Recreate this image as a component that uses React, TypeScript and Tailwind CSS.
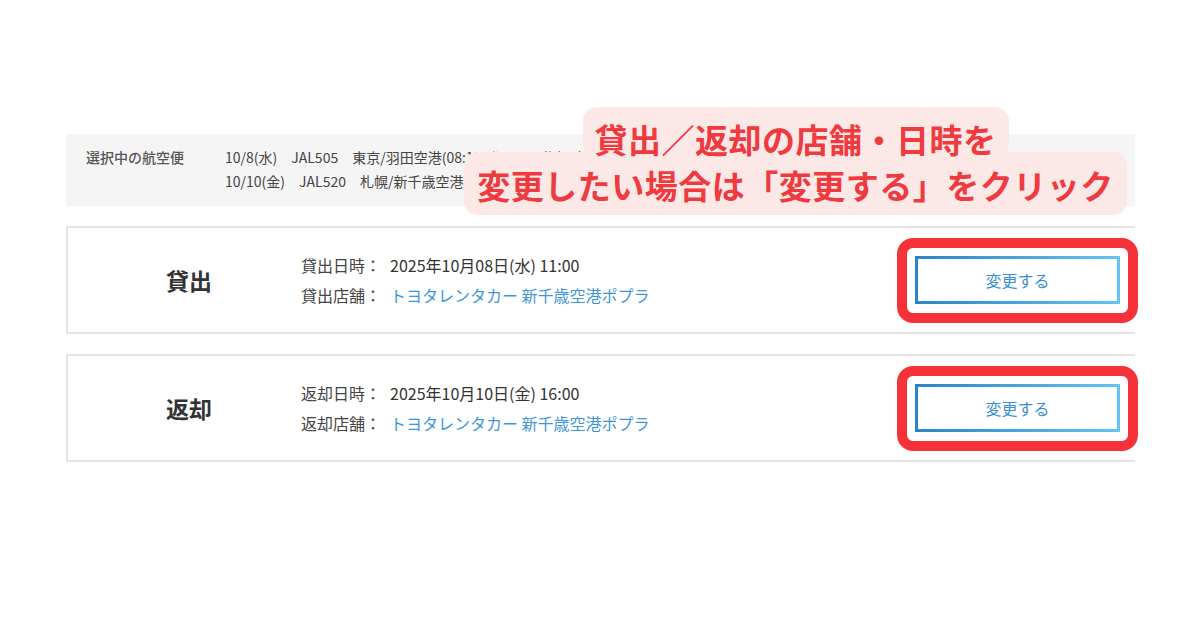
import React from "react";

function ChangeButton() {
  return (
    <div className="relative ml-auto mr-[15px] w-[205px] h-[48px]">
      <div className="absolute -left-[18px] -right-[18px] -top-[18px] -bottom-[19px] border-[10px] border-[#f5323a] rounded-[16px]" />
      <div className="w-full h-full bg-linear-to-r from-[#2c83c6] to-[#62c6f0] p-[3px]">
        <div className="w-full h-full bg-white flex items-center justify-center text-[16px] text-[#3a90d2]">
          変更する
        </div>
      </div>
    </div>
  );
}

function Card({
  title,
  dateLabel,
  date,
  shopLabel,
  shop,
}: {
  title: string;
  dateLabel: string;
  date: string;
  shopLabel: string;
  shop: string;
}) {
  return (
    <div className="h-[108px] border-l-2 border-t-2 border-b-2 border-[#e3e3e3] flex items-center">
      <div className="ml-[31px] w-[180px] text-center text-[23px] font-bold text-[#333]">{title}</div>
      <div className="ml-[22px] text-[16px] leading-[30px]">
        <div className="flex">
          <span className="w-[89px] text-[#444]">{dateLabel}</span>
          <span className="text-[#333]">{date}</span>
        </div>
        <div className="flex">
          <span className="w-[89px] text-[#444]">{shopLabel}</span>
          <span className="text-[#3d97d6]">{shop}</span>
        </div>
      </div>
      <ChangeButton />
    </div>
  );
}

export default function App() {
  return (
    <div className="relative w-[1200px] h-[630px] bg-white overflow-hidden font-['Noto_Sans_CJK_JP','Noto_Sans',sans-serif]">
      <div className="pl-[66px] pt-[134px] w-[1135px]">
        <div className="h-[72px] bg-[#f5f5f5] flex pl-[20px] pt-[11px] text-[14px] leading-[24px]">
          <div className="w-[139px] font-medium text-[#555]">選択中の航空便</div>
          <div className="text-[#444] whitespace-nowrap">
            <div>10/8(水)　JAL505　東京/羽田空港(08:10)発　→　札幌/新千歳空港(09:45)着</div>
            <div>10/10(金)　JAL520　札幌/新千歳空港(15:00)発　→　東京/羽田空港(16:40)着</div>
          </div>
        </div>
        <div className="mt-[20px]">
          <Card
            title="貸出"
            dateLabel="貸出日時："
            date="2025年10月08日(水) 11:00"
            shopLabel="貸出店舗："
            shop="トヨタレンタカー 新千歳空港ポプラ"
          />
        </div>
        <div className="mt-[20px]">
          <Card
            title="返却"
            dateLabel="返却日時："
            date="2025年10月10日(金) 16:00"
            shopLabel="返却店舗："
            shop="トヨタレンタカー 新千歳空港ポプラ"
          />
        </div>
      </div>

      {/* callout annotation */}
      <div className="absolute left-[583px] top-[107px] w-[426px] h-[50px] rounded-[14px] bg-[#fde8e8]" />
      <div className="absolute left-[464px] top-[152px] w-[663px] h-[63px] rounded-[14px] bg-[#fde8e8]" />
      <div className="absolute left-[464px] top-[116px] w-[663px] text-center text-[33px] tracking-[0.5px] leading-[46px] font-bold text-[#ef3a40] whitespace-nowrap">
        <div>貸出／返却の店舗・日時を</div>
        <div>変更したい場合は「変更する」をクリック</div>
      </div>
    </div>
  );
}
